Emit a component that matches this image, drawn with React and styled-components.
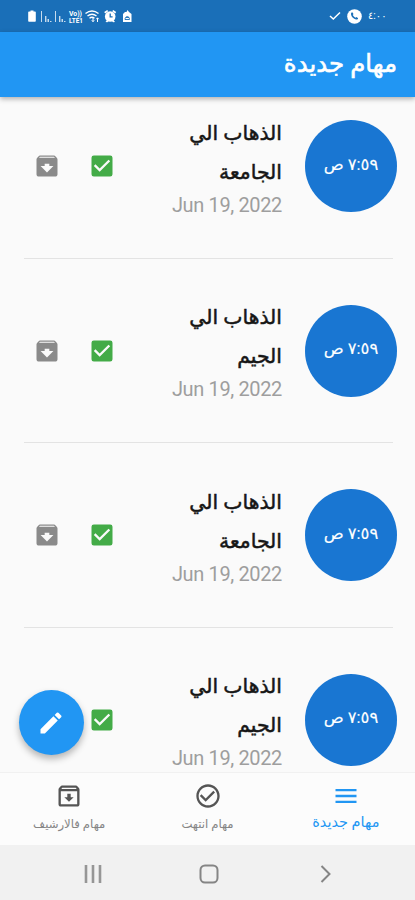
import React from "react";
import styled, { createGlobalStyle } from "styled-components";
import {
  MdArchive,
  MdCheckBox,
  MdEdit,
  MdMenu,
  MdCheckCircleOutline,
  MdOutlineArchive,
} from "react-icons/md";

const GlobalStyle = createGlobalStyle`
  * {
    box-sizing: border-box;
  }
  body {
    margin: 0;
    font-family: Roboto, "DejaVu Sans", sans-serif;
    background-color: #fafafa;
  }
`;

const Screen = styled.div`
  position: relative;
  display: flex;
  flex-direction: column;
  width: 415px;
  height: 900px;
  overflow: hidden;
  background-color: #fafafa;
`;

const StatusBar = styled.div`
  flex: none;
  height: 32px;
  padding: 0 28px 0 27px;
  display: flex;
  align-items: center;
  justify-content: space-between;
  background-color: #1a6fb8;
  color: #fff;
`;

const StatusGroup = styled.div`
  display: flex;
  align-items: center;
  gap: ${({ $gap }) => $gap}px;
`;

const Clock = styled.span`
  width: 19px;
  font-size: 10px;
  line-height: 12px;
  white-space: nowrap;
`;

const AppBar = styled.header`
  flex: none;
  position: relative;
  z-index: 1;
  height: 65px;
  padding: 0 18px 2px;
  display: flex;
  align-items: center;
  background-color: #2196f3;
  box-shadow: 0 2px 5px rgba(0, 0, 0, 0.3);
`;

const Title = styled.h1`
  margin: 0;
  color: #fff;
  font-size: 24.4px;
  font-weight: 400;
  line-height: 30px;
  white-space: nowrap;
  -webkit-text-stroke: 0.6px #fff;
`;

const TaskList = styled.main`
  flex: 1;
  min-height: 0;
  overflow: hidden;
`;

// the list is scrolled a little under the app bar
const TaskItems = styled.div`
  margin-top: -23px;
`;

const Task = styled.article`
  position: relative;
  height: 184.5px;
  padding: 0 18px;
  display: flex;
  align-items: center;

  &::after {
    content: "";
    position: absolute;
    left: 24px;
    right: 22px;
    bottom: 0;
    height: 1px;
    background-color: #e3e3e3;
  }
`;

const TimeCircle = styled.div`
  flex: none;
  width: 92px;
  height: 92px;
  padding-bottom: 4px;
  border-radius: 50%;
  display: flex;
  align-items: center;
  justify-content: center;
  background-color: #1976d2;
  color: #fff;
  font-size: 16.5px;
  white-space: nowrap;
  -webkit-text-stroke: 0.15px #fff;
`;

const TaskText = styled.div`
  flex: 1;
  min-width: 0;
  margin: 0 23px;
`;

const TaskTitle = styled.h2`
  margin: 0;
  color: #161616;
  font-size: 20.4px;
  font-weight: 400;
  line-height: 39px;
  -webkit-text-stroke: 0.5px #161616;
`;

const TaskDate = styled.div`
  direction: ltr;
  text-align: right;
  color: #9e9e9e;
  font-size: 20px;
  letter-spacing: -0.36px;
  line-height: 27px;
  white-space: nowrap;
`;

const IconButton = styled.button`
  flex: none;
  width: 55px;
  height: 55px;
  padding: 0;
  border: none;
  background: transparent;
  color: ${({ $color }) => $color};
  font-size: 28px;
  display: flex;
  align-items: center;
  justify-content: center;
`;

const Actions = styled.div`
  flex: none;
  display: flex;
  margin-left: 1px;
`;

const Fab = styled.button`
  position: absolute;
  left: 19px;
  top: 690px;
  width: 65px;
  height: 65px;
  padding: 0 1px 0 0;
  border: none;
  border-radius: 50%;
  display: flex;
  align-items: center;
  justify-content: center;
  background-color: #2196f3;
  color: #fff;
  font-size: 28px;
  box-shadow: 0 4px 7px rgba(0, 0, 0, 0.28);
`;

const BottomNav = styled.nav`
  flex: none;
  height: 73px;
  display: flex;
  border-top: 1px solid #f1f1f1;
  background-color: #fcfcfc;
`;

const NavItem = styled.a`
  flex: 1;
  display: flex;
  flex-direction: column;
  align-items: center;
  padding-top: 9px;
  color: ${({ $active }) => ($active ? "#2196f3" : "#555")};

  svg {
    font-size: 28px;
  }
`;

const NavLabel = styled.span`
  height: 20px;
  font-size: ${({ $active }) => ($active ? 14.5 : 11.7)}px;
  line-height: ${({ $active }) => ($active ? 26 : 28)}px;
  color: ${({ $active }) => ($active ? "#2196f3" : "#858585")};
  white-space: nowrap;
`;

const SystemNav = styled.div`
  flex: none;
  direction: ltr;
  height: 55px;
  padding: 2px 80px 0 83px;
  display: flex;
  align-items: center;
  justify-content: space-between;
  background-color: #f1f1f1;
`;

const StatusIcons = () => (
  <svg width="106" height="16" viewBox="0 0 106 16" fill="#fff">
    <path d="M2.500 3.500h1V2.500h3v1H8q.8 0 .8.800V13q0 .8-.8.800H2q-.8 0-.8-.800V4.300q0-.8.8-.800z" />
    <g opacity="0.75">
      <path d="M14 3h1v11h-1zM18 8h1.400v6H18zM20.500 11h1.500v3h-1.500zM23 13h1.500v1H23z" />
      <path d="M28 3h1v11h-1zM32 8h1.400v6H32zM34.500 11h1.500v3h-1.500zM37 13h1.500v1H37z" />
    </g>
    <text x="42" y="8" fontSize="7" fontWeight="700" textLength="13" lengthAdjust="spacingAndGlyphs">
      Vo))
    </text>
    <text x="42" y="14.500" fontSize="7" fontWeight="700" textLength="14" lengthAdjust="spacingAndGlyphs">
      LTE1
    </text>
    <g fill="none" stroke="#fff" strokeWidth="1.400">
      <path d="M58.500 5.500q6.500-5 13 0M60.500 8q4.500-3.500 9 0M62.500 10.300q2.500-2 5 0" />
      <path d="M66 9.500v4M64.800 12.300l1.200 1.400 1.200-1.400M70.500 14v-4M69.300 11.200l1.200-1.400 1.200 1.400" strokeWidth="1" />
    </g>
    <circle cx="83.200" cy="8.500" r="5.300" />
    <path d="M77.200 4l3-2 1 1.200-3 2.300zM89.200 4l-3-2-1 1.200 3 2.300zM78.500 14l1.500-2 1.500 1-1 1.300zM88 14l-1.500-2-1.500 1 1 1.300z" />
    <path d="M83.200 5.500v3.300h2.400" fill="none" stroke="#1a6fb8" strokeWidth="1.300" />
    <path d="M98 4h1.500l1-2 1.500 2 2.500 2v8H96V6z" />
    <path d="M98 11.500c0-4 4.500-4 4.500 0zM99 9.500h3" fill="none" stroke="#1a6fb8" strokeWidth="0.900" />
  </svg>
);

const CheckIcon = () => (
  <svg width="12" height="10" viewBox="0 0 12 10">
    <path d="M1 5l3.300 3L11 1.500" fill="none" stroke="#fff" strokeWidth="1.500" />
  </svg>
);

const CallIcon = () => (
  <svg width="15" height="15" viewBox="0 0 15 15">
    <circle cx="7.500" cy="7.500" r="7.300" fill="#fff" />
    <path d="M4.200 4.100q.8-1.300 1.500-.4l.8 1.400-.7 1q.8 1.800 2.600 2.600l1-.8 1.500 1q.7.7-.6 1.500c-2.600 1.200-7.300-3.400-6.100-6.300z" fill="#1a6fb8" />
  </svg>
);

const RecentsIcon = () => (
  <svg width="20" height="20" viewBox="0 0 20 20">
    <path d="M3 1v18M10 1v18M17 1v18" stroke="#969696" strokeWidth="2.600" />
  </svg>
);

const HomeIcon = () => (
  <svg width="20" height="20" viewBox="0 0 20 20">
    <rect x="1.500" y="1.500" width="17" height="17" rx="4.500" fill="none" stroke="#858585" strokeWidth="2" />
  </svg>
);

const BackIcon = () => (
  <svg width="20" height="20" viewBox="0 0 20 20">
    <path d="M6.500 2l8 8-8 8" fill="none" stroke="#858585" strokeWidth="2" />
  </svg>
);

const tasks = [
  { id: 1, title: ["الذهاب الي", "الجامعة"], time: "٧:٥٩ ص", date: "Jun 19, 2022" },
  { id: 2, title: ["الذهاب الي", "الجيم"], time: "٧:٥٩ ص", date: "Jun 19, 2022" },
  { id: 3, title: ["الذهاب الي", "الجامعة"], time: "٧:٥٩ ص", date: "Jun 19, 2022" },
  { id: 4, title: ["الذهاب الي", "الجيم"], time: "٧:٥٩ ص", date: "Jun 19, 2022" },
];

const TaskRow = ({ task }) => (
  <Task>
    <TimeCircle>{task.time}</TimeCircle>
    <TaskText>
      <TaskTitle>
        {task.title[0]}
        <br />
        {task.title[1]}
      </TaskTitle>
      <TaskDate>{task.date}</TaskDate>
    </TaskText>
    <Actions>
      <IconButton $color="#43ab47">
        <MdCheckBox />
      </IconButton>
      <IconButton $color="#8a8a8a">
        <MdArchive />
      </IconButton>
    </Actions>
  </Task>
);

const App = () => {
  return (
    <>
      <GlobalStyle />
      <Screen dir="rtl">
        <StatusBar dir="ltr">
          <StatusIcons />
          <StatusGroup $gap={6}>
            <CheckIcon />
            <CallIcon />
            <Clock>٤:٠٠</Clock>
          </StatusGroup>
        </StatusBar>
        <AppBar>
          <Title>مهام جديدة</Title>
        </AppBar>
        <TaskList>
          <TaskItems>
            {tasks.map((task) => (
              <TaskRow key={task.id} task={task} />
            ))}
          </TaskItems>
        </TaskList>
        <BottomNav>
          <NavItem $active>
            <MdMenu />
            <NavLabel $active>مهام جديدة</NavLabel>
          </NavItem>
          <NavItem>
            <MdCheckCircleOutline />
            <NavLabel>مهام انتهت</NavLabel>
          </NavItem>
          <NavItem>
            <MdOutlineArchive />
            <NavLabel>مهام فالارشيف</NavLabel>
          </NavItem>
        </BottomNav>
        <SystemNav>
          <RecentsIcon />
          <HomeIcon />
          <BackIcon />
        </SystemNav>
        <Fab>
          <MdEdit />
        </Fab>
      </Screen>
    </>
  );
};

export default App;
